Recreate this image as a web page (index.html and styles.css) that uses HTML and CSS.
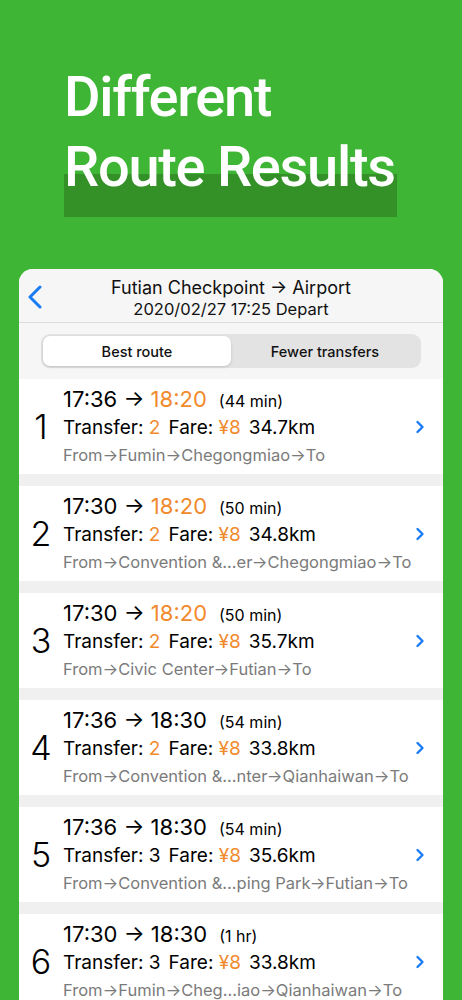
FILE: index.html
```html
<!DOCTYPE html>
<html lang="en">
<head>
  <meta charset="UTF-8">
  <title>Different Route Results</title>
  <link rel="stylesheet" href="styles.css">
</head>
<body>
  <h1 class="headline">
    <span class="line">Different</span>
    <span class="line mark">Route Results</span>
  </h1>

  <div class="card">
    <div class="nav">
      <svg class="back" width="16" height="24" viewBox="0 0 16 24"><path d="M13 2 L3 12 L13 22" fill="none" stroke="#1a7cf5" stroke-width="3" stroke-linecap="round" stroke-linejoin="round"/></svg>
      <div class="nav-title">Futian Checkpoint → Airport</div>
      <div class="nav-sub">2020/02/27 17:25 Depart</div>
    </div>

    <div class="seg-wrap">
      <div class="seg">
        <div class="seg-item active">Best route</div>
        <div class="seg-item">Fewer transfers</div>
      </div>
    </div>

    <div class="list" id="list"></div>
  </div>

  <script>
    const routes = [
      { dep: "17:36", arr: "18:20", late: true, dur: "44 min", transfer: 2, hot: true, km: "34.7km", path: "From→Fumin→Chegongmiao→To" },
      { dep: "17:30", arr: "18:20", late: true, dur: "50 min", transfer: 2, hot: true, km: "34.8km", path: "From→Convention &...er→Chegongmiao→To" },
      { dep: "17:30", arr: "18:20", late: true, dur: "50 min", transfer: 2, hot: true, km: "35.7km", path: "From→Civic Center→Futian→To" },
      { dep: "17:36", arr: "18:30", late: false, dur: "54 min", transfer: 2, hot: true, km: "33.8km", path: "From→Convention &...nter→Qianhaiwan→To" },
      { dep: "17:36", arr: "18:30", late: false, dur: "54 min", transfer: 3, hot: false, km: "35.6km", path: "From→Convention &...ping Park→Futian→To" },
      { dep: "17:30", arr: "18:30", late: false, dur: "1 hr", transfer: 3, hot: false, km: "33.8km", path: "From→Fumin→Cheg...iao→Qianhaiwan→To" }
    ];

    const list = document.getElementById("list");
    const chevron = '<svg class="chev" width="10" height="14" viewBox="0 0 10 14"><path d="M2.5 2 L7.5 7 L2.5 12" fill="none" stroke="#1a7cf5" stroke-width="2.4" stroke-linecap="round" stroke-linejoin="round"/></svg>';

    routes.forEach((r, i) => {
      const row = document.createElement("div");
      row.className = "row";
      row.innerHTML =
        `<div class="num">${i + 1}</div>` +
        `<div class="info">` +
          `<div class="times">${r.dep} → <span class="${r.late ? "orange" : ""}">${r.arr}</span><span class="dur">(${r.dur})</span></div>` +
          `<div class="meta">Transfer: <span class="${r.hot ? "orange" : ""}">${r.transfer}</span><span class="gap"></span>Fare: <span class="orange">¥8</span><span class="gap"></span>${r.km}</div>` +
          `<div class="path">${r.path}</div>` +
        `</div>` + chevron;
      list.appendChild(row);
    });
  </script>
</body>
</html>
```

FILE: styles.css
```css
body {
  margin: 0;
  background: #3fb535;
  font-family: Inter, "Liberation Sans", sans-serif;
  overflow: hidden;
}
.headline {
  margin: 0;
  padding: 62px 0 0 64px;
  height: 269px;
  box-sizing: border-box;
  font-family: Roboto, sans-serif;
  font-weight: 500;
  font-size: 56px;
  line-height: 70px;
  color: #fff;
  letter-spacing: -1.3px;
}
.line {
  display: block;
}
.mark {
  display: inline-block;
  padding-right: 2px;
  background: linear-gradient(to bottom, transparent 42px, #339128 42px, #339128 85px, transparent 85px);
  height: 86px;
}
.card {
  margin: 0 19px;
  background: #f0f0f0;
  border-radius: 14px 14px 0 0;
  overflow: hidden;
  height: 740px;
}
.nav {
  position: relative;
  height: 54px;
  background: #f6f6f6;
  border-bottom: 1px solid #dcdcdc;
  text-align: center;
  color: #111;
  box-sizing: border-box;
  padding-top: 8px;
}
.back {
  position: absolute;
  left: 8px;
  top: 16px;
}
.nav-title {
  font-size: 18px;
  line-height: 22px;
}
.nav-sub {
  font-size: 16.5px;
  line-height: 20px;
}
.seg-wrap {
  background: #f6f6f6;
  padding: 11px 22px 11px;
}
.seg {
  display: flex;
  background: #e3e3e3;
  border-radius: 9px;
  padding: 2px;
  height: 34px;
  box-sizing: border-box;
}
.seg-item {
  flex: 1;
  display: flex;
  align-items: center;
  justify-content: center;
  font-size: 14.5px;
  font-weight: 500;
  color: #111;
  border-radius: 7px;
}
.seg-item.active {
  background: #fff;
  box-shadow: 0 1px 3px rgba(0, 0, 0, 0.15);
}
.list {
  display: flex;
  flex-direction: column;
  gap: 12px;
}
.row {
  display: flex;
  align-items: center;
  background: #fff;
  height: 95px;
  padding-right: 18px;
}
.num {
  width: 44px;
  text-align: center;
  font-size: 34px;
  font-weight: 300;
  color: #000;
}
.info {
  flex: 1;
  color: #000;
}
.times {
  font-size: 22px;
  line-height: 26px;
}
.dur {
  font-size: 16px;
  margin-left: 12px;
}
.meta {
  font-size: 19px;
  line-height: 28px;
}
.gap {
  display: inline-block;
  width: 8px;
}
.path {
  font-size: 16.5px;
  line-height: 26px;
  color: #7b7b7b;
}
.orange {
  color: #f08a2c;
}
```
